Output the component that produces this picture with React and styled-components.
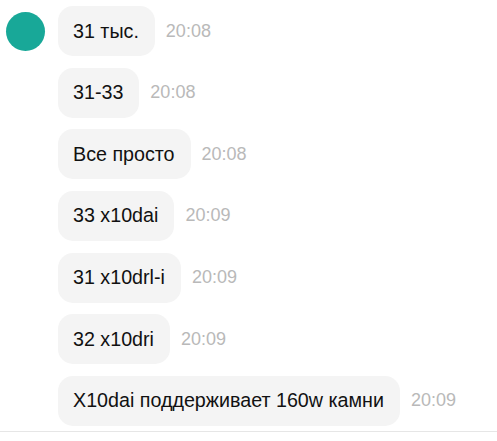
import React from "react";
import styled, { createGlobalStyle } from "styled-components";

const messages = [
  { text: "31 тыс.", time: "20:08" },
  { text: "31-33", time: "20:08" },
  { text: "Все просто", time: "20:08" },
  { text: "33 x10dai", time: "20:09" },
  { text: "31 x10drl-i", time: "20:09" },
  { text: "32 x10dri", time: "20:09" },
  { text: "X10dai поддерживает 160w камни", time: "20:09" },
];

const App = () => {
  return (
    <>
      <GlobalStyle />
      <Group>
        <AvatarCol>
          <Avatar />
        </AvatarCol>
        <Messages>
          {messages.map((m, i) => (
            <Row key={i}>
              <Bubble>{m.text}</Bubble>
              <Time>{m.time}</Time>
            </Row>
          ))}
        </Messages>
      </Group>
    </>
  );
};

const GlobalStyle = createGlobalStyle`
  body {
    margin: 0;
    background: #fff;
    font-family: "Liberation Sans", Arial, sans-serif;
  }
`;

const Group = styled.div`
  display: flex;
  padding-top: 6px;
  border-bottom: 1px solid #e6e6e6;
  padding-bottom: 5px;
`;

const AvatarCol = styled.div`
  width: 58px;
  flex-shrink: 0;
  padding-left: 6px;
  box-sizing: border-box;
  padding-top: 6px;
`;

const Avatar = styled.div`
  width: 39px;
  height: 39px;
  border-radius: 50%;
  background: #18a898;
`;

const Messages = styled.div`
  display: flex;
  flex-direction: column;
  gap: 11.67px;
`;

const Row = styled.div`
  display: flex;
  align-items: center;
  gap: 11px;
`;

const Bubble = styled.div`
  background: #f4f4f4;
  border-radius: 15px;
  height: 50px;
  box-sizing: border-box;
  padding: 0 16px 0 15px;
  display: flex;
  align-items: center;
  font-size: 19.7px;
  color: #111;
  white-space: nowrap;
`;

const Time = styled.span`
  font-size: 18px;
  color: #b9b9b9;
`;

export default App;
